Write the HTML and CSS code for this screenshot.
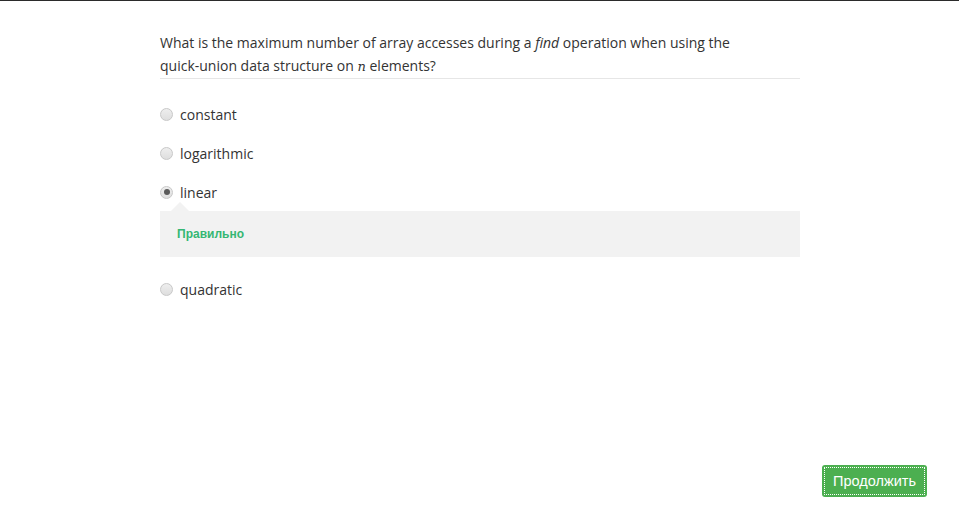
FILE: index.html
```html
<!DOCTYPE html>
<html>
<head>
<meta charset="utf-8">
<link rel="stylesheet" href="styles.css">
</head>
<body>
<div class="page">
  <div class="quiz">
    <div class="question">What is the maximum number of array accesses during a <em>find</em> operation when using the quick-union data structure on <span class="math">n</span> elements?</div>
    <div class="options">
      <label class="option"><span class="radio"></span><span class="label">constant</span></label>
      <label class="option"><span class="radio"></span><span class="label">logarithmic</span></label>
      <label class="option"><span class="radio checked"></span><span class="label">linear</span></label>
      <div class="feedback"><span class="correct">Правильно</span></div>
      <label class="option last"><span class="radio"></span><span class="label">quadratic</span></label>
    </div>
  </div>
  <div class="footer">
    <button class="continue">Продолжить</button>
  </div>
</div>
</body>
</html>
```

FILE: styles.css
```css
html, body {
  margin: 0;
  padding: 0;
  background: #fff;
}
body {
  border-top: 1px solid #2b2b2b;
  font-family: "Open Sans", "Liberation Sans", sans-serif;
  color: #333;
}
.page {
  height: 506px;
  display: flex;
  flex-direction: column;
}
.quiz {
  width: 640px;
  margin-left: 160px;
  padding-top: 31px;
}
.question {
  font-size: 14px;
  line-height: 22.5px;
  border-bottom: 1px solid #e6e6e6;
  padding-right: 60px;
}
.question em {
  font-style: italic;
}
.math {
  font-family: "DejaVu Serif", "Liberation Serif", serif;
  font-style: italic;
  font-size: 13px;
}
.options {
  display: flex;
  flex-direction: column;
  margin-top: 25px;
}
.option {
  display: flex;
  align-items: center;
  height: 20px;
  margin-bottom: 19px;
  font-size: 14px;
}
.option.last {
  margin-top: 22px;
}
.radio {
  width: 11px;
  height: 11px;
  border-radius: 50%;
  border: 1px solid #c8c8c8;
  background: linear-gradient(#eeeeee, #dedede);
  margin-right: 7px;
  display: flex;
  align-items: center;
  justify-content: center;
}
.radio.checked::after {
  content: "";
  width: 6px;
  height: 6px;
  border-radius: 50%;
  background: #5a5a5a;
}
.feedback {
  position: relative;
  background: #f2f2f2;
  height: 46px;
  margin-top: -10px;
  display: flex;
  align-items: center;
  padding-left: 17px;
}
.feedback::before {
  content: "";
  position: absolute;
  left: 11px;
  top: -9px;
  border-left: 9px solid transparent;
  border-right: 9px solid transparent;
  border-bottom: 9px solid #f2f2f2;
}
.correct {
  font-family: "Liberation Sans", Arial, sans-serif;
  font-weight: bold;
  font-size: 12px;
  color: #35b773;
}
.footer {
  margin-top: auto;
  display: flex;
  justify-content: flex-end;
  padding: 0 32px 10px 0;
}
.continue {
  width: 105px;
  height: 32px;
  background: #4caf50;
  border: none;
  border-radius: 3px;
  color: #fff;
  font-family: "Liberation Sans", Arial, sans-serif;
  font-size: 14.5px;
  outline: 1px dotted #fff;
  outline-offset: -3px;
  padding: 0;
}
```
